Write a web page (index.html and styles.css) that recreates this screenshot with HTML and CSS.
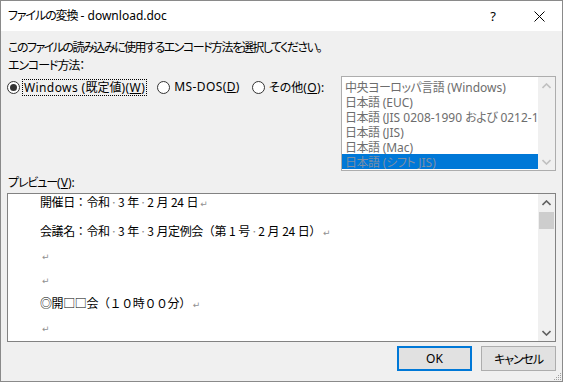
FILE: index.html
```html
<!DOCTYPE html>
<html lang="ja">
<head>
  <meta charset="UTF-8">
  <title>ファイルの変換 - download.doc</title>
  <link rel="stylesheet" href="styles.css">
</head>
<body>
  <div class="window">
    <div class="titlebar">
      <span class="title"><span class="ja">ファイルの変換</span> - download.doc</span>
      <span class="caption-btn help">?</span>
      <span class="caption-btn close">
        <svg width="11" height="11" viewBox="0 0 11 11"><path d="M0.5 0.5 L10.5 10.5 M10.5 0.5 L0.5 10.5" stroke="#000" stroke-width="1" fill="none"/></svg>
      </span>
    </div>

    <div class="content">
      <p class="line"><span class="ja tight">このファイルの読み込みに使用するエンコード方法を選択してください。</span></p>
      <p class="line"><span class="ja">エンコード方法：</span></p>

      <div class="encoding">
        <div class="radios">
          <label class="radio checked"><span class="circle"></span><span class="caption focused">Windows (<span class="ja">既定値</span>)(<u>W</u>)</span></label>
          <label class="radio"><span class="circle"></span><span class="caption">MS-DOS(<u>D</u>)</span></label>
          <label class="radio"><span class="circle"></span><span class="caption"><span class="ja">その他</span>(<u>O</u>):</span></label>
        </div>
        <div class="listbox">
          <ul class="items">
            <li><span class="ja">中央ヨーロッパ言語</span> (Windows)</li>
            <li><span class="ja">日本語</span> (EUC)</li>
            <li><span class="ja">日本語</span> (JIS 0208-1990 <span class="ja">および</span> 0212-1990)</li>
            <li><span class="ja">日本語</span> (JIS)</li>
            <li><span class="ja">日本語</span> (Mac)</li>
            <li class="selected"><span class="ja">日本語</span> (<span class="ja">シフト</span> JIS)</li>
          </ul>
          <div class="scrollbar disabled">
            <span class="arrow"><svg width="9" height="6" viewBox="0 0 9 6"><path d="M0.5 5 L4.5 1 L8.5 5" /></svg></span>
            <span class="track"></span>
            <span class="arrow"><svg width="9" height="6" viewBox="0 0 9 6"><path d="M0.5 1 L4.5 5 L8.5 1" /></svg></span>
          </div>
        </div>
      </div>

      <p class="line preview-label"><span class="ja">プレビュー</span>(<u>V</u>):</p>
      <div class="preview">
        <div class="doc">
          <p class="first">開催日：令和<span class="mark">·</span>3<span class="gap"></span>年<span class="mark">·</span>2<span class="gap"></span>月<span class="gap"></span>24<span class="gap"></span>日<span class="ret">↵</span></p>
          <p>会議名：令和<span class="mark">·</span>3<span class="gap"></span>年<span class="mark">·</span>3<span class="gap"></span>月定例会（第<span class="gap"></span>1<span class="gap"></span>号<span class="mark">·</span>2<span class="gap"></span>月<span class="gap"></span>24<span class="gap"></span>日）<span class="ret">↵</span></p>
          <p><span class="ret">↵</span></p>
          <p><span class="ret">↵</span></p>
          <p>◎開□□会（１０時００分）<span class="ret">↵</span></p>
          <p><span class="ret">↵</span></p>
        </div>
        <div class="scrollbar">
          <span class="arrow"><svg width="9" height="6" viewBox="0 0 9 6"><path d="M0.5 5 L4.5 1 L8.5 5" /></svg></span>
          <span class="thumb"></span>
          <span class="track"></span>
          <span class="arrow"><svg width="9" height="6" viewBox="0 0 9 6"><path d="M0.5 1 L4.5 5 L8.5 1" /></svg></span>
        </div>
      </div>

      <div class="buttons">
        <button class="btn default">OK</button>
        <button class="btn"><span class="ja">キャンセル</span></button>
      </div>
    </div>

    <svg class="grip" width="9" height="9" viewBox="0 0 9 9">
      <rect x="7" y="1" width="1" height="1"/><rect x="5" y="3" width="1" height="1"/><rect x="7" y="3" width="1" height="1"/>
      <rect x="3" y="5" width="1" height="1"/><rect x="5" y="5" width="1" height="1"/><rect x="7" y="5" width="1" height="1"/>
      <rect x="1" y="7" width="1" height="1"/><rect x="3" y="7" width="1" height="1"/><rect x="5" y="7" width="1" height="1"/><rect x="7" y="7" width="1" height="1"/>
    </svg>
  </div>
</body>
</html>
```

FILE: styles.css
```css
* {
  box-sizing: border-box;
}
body {
  margin: 0;
  font-family: "Noto Sans", "Noto Sans CJK JP", sans-serif;
  font-size: 12px;
  color: #000;
  background: #fff;
}
p, ul {
  margin: 0;
  padding: 0;
}
.ja {
  font-family: "Noto Sans CJK JP", sans-serif;
  font-feature-settings: "palt";
  letter-spacing: -1.1px;
}
.ja.tight {
  letter-spacing: -1.5px;
}
.window {
  position: relative;
  width: 563px;
  height: 382px;
  border: 1px solid #8a8a8a;
  background: #f0f0f0;
  display: flex;
  flex-direction: column;
}
.titlebar {
  height: 30px;
  background: #fff;
  display: flex;
  align-items: center;
}
.title {
  flex: 1;
  padding-left: 7px;
  padding-bottom: 2px;
}
.caption-btn {
  width: 46px;
  height: 30px;
  display: flex;
  align-items: center;
  justify-content: center;
}
.help {
  font-size: 13px;
}
.content {
  flex: 1;
  padding: 7px 6px 0 6px;
  display: flex;
  flex-direction: column;
}
.line {
  height: 18px;
  line-height: 18px;
  padding-left: 1px;
}
.encoding {
  display: flex;
  align-items: flex-start;
  height: 97px;
  padding-top: 2px;
}
.radios {
  display: flex;
  gap: 10px;
  padding-top: 3px;
}
.radio {
  display: flex;
  align-items: center;
  height: 16px;
}
.circle {
  width: 13px;
  height: 13px;
  border: 1px solid #333;
  border-radius: 50%;
  background: #fff;
  margin-right: 2px;
  display: flex;
  align-items: center;
  justify-content: center;
}
.radio.checked .circle::after {
  content: "";
  width: 7px;
  height: 7px;
  border-radius: 50%;
  background: #333;
}
.caption {
  border: 1px dotted transparent;
  padding: 0 1px 0 1px;
  line-height: 14px;
  letter-spacing: 0.4px;
}
.caption .ja {
  letter-spacing: 0;
}
.caption.focused {
  border-color: #000;
}
.listbox {
  margin-left: auto;
  width: 215px;
  height: 95px;
  border: 1px solid #adadad;
  background: #fff;
  display: flex;
}
.items {
  flex: 1;
  list-style: none;
  padding-top: 2px;
  overflow: hidden;
}
.items li {
  height: 15px;
  line-height: 15px;
  padding-left: 3px;
  color: #6d6d6d;
  white-space: nowrap;
  overflow: hidden;
}
.items .ja {
  letter-spacing: -0.5px;
}
.items li.selected {
  background: #0078d7;
  color: #7d8fa6;
}
.scrollbar {
  width: 17px;
  background: #f0f0f0;
  display: flex;
  flex-direction: column;
}
.arrow {
  height: 17px;
  display: flex;
  align-items: center;
  justify-content: center;
}
.arrow svg path {
  fill: none;
  stroke: #606060;
  stroke-width: 1.6;
}
.scrollbar.disabled .arrow svg path {
  stroke: #c0c0c0;
}
.track {
  flex: 1;
}
.thumb {
  height: 17px;
  margin: 1px 1px 0 1px;
  background: #cdcdcd;
}
.preview-label {
  margin-top: 2px;
}
.preview {
  margin-top: 2px;
  height: 149px;
  border: 1px solid #828282;
  background: #fff;
  display: flex;
}
.doc {
  flex: 1;
  padding-left: 32px;
  font-family: "Noto Sans CJK JP", sans-serif;
  letter-spacing: -0.4px;
  white-space: nowrap;
}
.doc p {
  height: 16px;
  line-height: 16px;
  margin-bottom: 8px;
}
.doc p.first {
  margin-bottom: 13px;
}
.mark {
  color: #8c8c8c;
  padding: 0 1px;
}
.gap {
  display: inline-block;
  width: 3px;
}
.ret {
  color: #909090;
  font-family: "DejaVu Sans", sans-serif;
  font-size: 9px;
  padding-left: 2px;
}
.buttons {
  display: flex;
  justify-content: flex-end;
  gap: 9px;
  margin-top: 4px;
}
.btn {
  width: 75px;
  height: 25px;
  font-family: "Noto Sans", sans-serif;
  font-size: 12px;
  background: #e1e1e1;
  border: 1px solid #adadad;
  padding: 0;
  color: #000;
}
.btn.default {
  border: 2px solid #0078d7;
}
.grip {
  position: absolute;
  right: 0;
  bottom: 0;
  fill: #a0a0a0;
}
```
